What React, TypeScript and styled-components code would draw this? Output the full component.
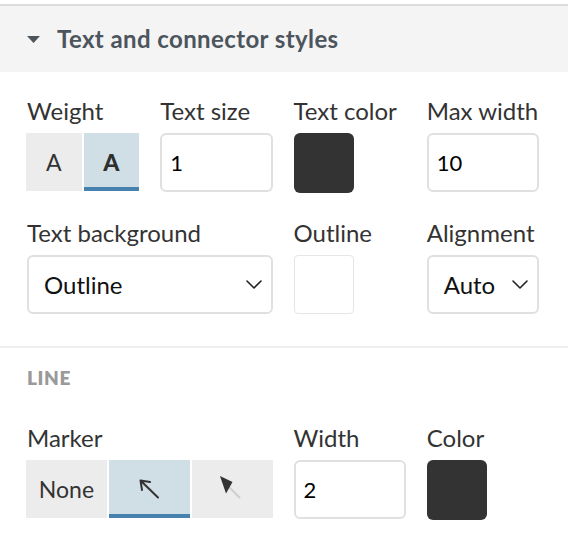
import React from "react";
import styled, { createGlobalStyle } from "styled-components";

const GlobalStyle = createGlobalStyle`
    html, body {
        margin: 0;
        padding: 0;
        background: #ffffff;
        font-family: "Lato", "Open Sans", sans-serif;
    }
    * {
        box-sizing: border-box;
    }
`;

function Chevron() {
    return (
        <svg width="16" height="9" viewBox="0 0 16 9" fill="none">
            <path
                d="M1 1 L8 8 L15 1"
                stroke="#222"
                strokeWidth="1.6"
                strokeLinejoin="round"
                strokeLinecap="round"
            />
        </svg>
    );
}

function OpenArrow() {
    return (
        <svg width="22" height="22" viewBox="0 0 22 22" fill="none">
            <path
                d="M20 19.5 L2.5 2.5 M2.5 2.5 L12 4 M2.5 2.5 L4 12"
                stroke="#333"
                strokeWidth="2"
                strokeLinecap="round"
                strokeLinejoin="round"
            />
        </svg>
    );
}

function FilledArrow() {
    return (
        <svg width="26" height="26" viewBox="0 0 26 26" fill="none">
            <path
                d="M10 11 L20.5 21.5"
                stroke="#cfcfcf"
                strokeWidth="2"
                strokeLinecap="round"
            />
            <path d="M1 0 L13.5 6 L7 17.5 Z" fill="#333" />
        </svg>
    );
}

export default function App() {
    return (
        <>
            <GlobalStyle />
            <Panel>
                <Header>
                    <svg width="13" height="7" viewBox="0 0 13 7">
                        <path d="M0 0 L13 0 L6.5 7 Z" fill="#4d555c" />
                    </svg>
                    <Title>Text and connector styles</Title>
                </Header>

                <Section $divided>
                    <FieldGrid>
                        <Field>
                            <Label>Weight</Label>
                            <Segmented $count={2}>
                                <SegButton>
                                    <WeightGlyph>A</WeightGlyph>
                                </SegButton>
                                <SegButton $active>
                                    <WeightGlyph $bold>A</WeightGlyph>
                                </SegButton>
                            </Segmented>
                        </Field>
                        <Field>
                            <Label>Text size</Label>
                            <TextInput defaultValue="1" />
                        </Field>
                        <Field>
                            <Label>Text color</Label>
                            <Swatch $color="#333333" />
                        </Field>
                        <Field>
                            <Label>Max width</Label>
                            <TextInput defaultValue="10" />
                        </Field>

                        <Field $span={2}>
                            <Label>Text background</Label>
                            <SelectBox>
                                <span>Outline</span>
                                <Chevron />
                            </SelectBox>
                        </Field>
                        <Field>
                            <Label>Outline</Label>
                            <Swatch $color="#ffffff" $bordered />
                        </Field>
                        <Field>
                            <Label>Alignment</Label>
                            <SelectBox>
                                <span>Auto</span>
                                <Chevron />
                            </SelectBox>
                        </Field>
                    </FieldGrid>
                </Section>

                <Section>
                    <SectionTitle>Line</SectionTitle>
                    <FieldGrid>
                        <Field $span={2}>
                            <Label>Marker</Label>
                            <Segmented $count={3}>
                                <SegButton>
                                    <SegText>None</SegText>
                                </SegButton>
                                <SegButton $active>
                                    <OpenArrow />
                                </SegButton>
                                <SegButton>
                                    <FilledArrow />
                                </SegButton>
                            </Segmented>
                        </Field>
                        <Field>
                            <Label>Width</Label>
                            <TextInput defaultValue="2" />
                        </Field>
                        <Field>
                            <Label>Color</Label>
                            <Swatch $color="#333333" />
                        </Field>
                    </FieldGrid>
                </Section>
            </Panel>
        </>
    );
}

const Panel = styled.div`
    width: 568px;
    padding-top: 4px;
    background: #ffffff;
`;

const Header = styled.div`
    display: flex;
    align-items: center;
    gap: 17px;
    height: 68px;
    padding-left: 27px;
    background-color: #f4f4f4;
    border-top: 2px solid #dddddd;
`;

const Title = styled.h2`
    margin: 0;
    font-size: 24px;
    font-weight: 700;
    letter-spacing: 0.4px;
    color: #4c555d;
    line-height: 28px;
`;

const Section = styled.section<{ $divided?: boolean }>`
    padding: ${(p) => (p.$divided ? "25px 29px 32px 27px" : "18px 29px 0 27px")};
    border-bottom: ${(p) => (p.$divided ? "2px solid #eeeeee" : "none")};
`;

const SectionTitle = styled.h3`
    margin: 0 0 34px;
    font-size: 19px;
    line-height: 24px;
    font-weight: 800;
    letter-spacing: 0.6px;
    text-transform: uppercase;
    color: #9a9a9a;
`;

const FieldGrid = styled.div`
    display: grid;
    grid-template-columns: repeat(4, 1fr);
    column-gap: 21px;
    row-gap: 26px;
    align-items: start;
`;

const Field = styled.div<{ $span?: number }>`
    display: flex;
    flex-direction: column;
    grid-column: span ${(p) => p.$span ?? 1};
`;

const Label = styled.label`
    font-size: 24px;
    line-height: 28px;
    color: #333333;
    margin-bottom: 8px;
    white-space: nowrap;
`;

const Segmented = styled.div<{ $count: number }>`
    display: grid;
    grid-template-columns: repeat(${(p) => p.$count}, 1fr);
    gap: 2px;
    margin-left: -1px;
`;

const SegButton = styled.div<{ $active?: boolean }>`
    display: flex;
    align-items: center;
    justify-content: center;
    height: 58px;
    padding-top: ${(p) => (p.$active ? "4px" : "0")};
    background-color: ${(p) => (p.$active ? "#d0dee5" : "#ececec")};
    border-bottom: ${(p) => (p.$active ? "4px solid #4682ad" : "none")};
    cursor: pointer;
`;

const WeightGlyph = styled.span<{ $bold?: boolean }>`
    font-size: 23px;
    font-weight: ${(p) => (p.$bold ? 900 : 400)};
    color: ${(p) => (p.$bold ? "#2e2e2e" : "#333333")};
`;

const SegText = styled.span`
    font-size: 23px;
    color: #333333;
`;

const TextInput = styled.input`
    width: 100%;
    height: 59px;
    padding: 0 8px;
    border: 2px solid #e0e0e0;
    border-radius: 6px;
    font-family: "Lato", "Open Sans", sans-serif;
    font-size: 22px;
    color: #000000;
    background: #ffffff;
    outline: none;
`;

const SelectBox = styled.div`
    display: flex;
    align-items: center;
    justify-content: space-between;
    height: 59px;
    padding: 0 9px 0 15px;
    border: 2px solid #e0e0e0;
    border-radius: 6px;
    font-size: 24px;
    color: #111111;
    background: #ffffff;
    cursor: pointer;
`;

const Swatch = styled.div<{ $color: string; $bordered?: boolean }>`
    width: 60px;
    height: ${(p) => (p.$bordered ? "59px" : "60px")};
    border-radius: ${(p) => (p.$bordered ? "4px" : "6px")};
    background-color: ${(p) => p.$color};
    border: ${(p) => (p.$bordered ? "1px solid #e6e6e6" : "none")};
    cursor: pointer;
`;
